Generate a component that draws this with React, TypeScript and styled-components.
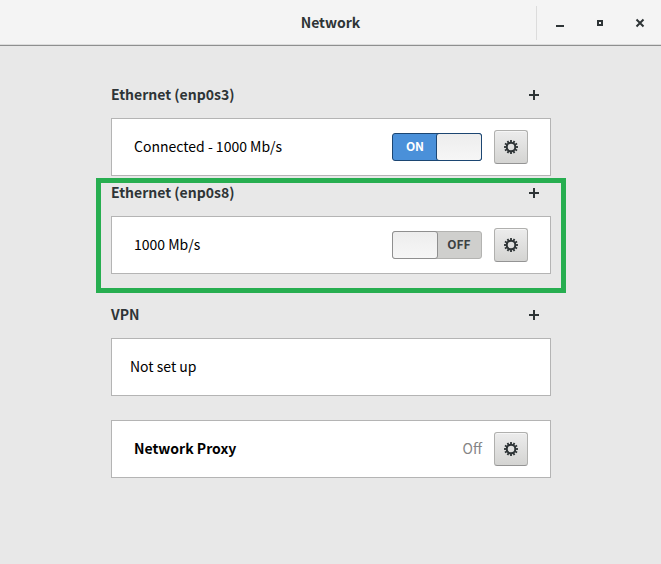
import React from 'react';
import styled, { createGlobalStyle, css } from 'styled-components';

const Global = createGlobalStyle`
  * { box-sizing: border-box; }
  body {
    margin: 0;
    background: #e8e8e8;
    color: #2e3436;
    font: 14px/20px "Noto Sans CJK SC", "Noto Sans", sans-serif;
  }
  button { font: inherit; color: inherit; padding: 0; }
`;

const HeaderBar = styled.header`
  display: grid;
  grid-template-columns: 1fr auto 1fr;
  align-items: center;
  height: 46px;
  background: #f4f4f4;
  border-bottom: 1px solid #8e8f8f;
  box-shadow: inset 0 -1px #dcdcdc;
`;

const Title = styled.h1`
  grid-column: 2;
  margin: 0;
  padding-bottom: 2px;
  font-size: 14px;
  line-height: 20px;
  font-weight: 700;
`;

const WindowControls = styled.div`
  justify-self: end;
  display: flex;
  align-items: center;
  height: 34px;
  padding: 0 1px 0 3px;
  border-left: 1px solid #dcdcdc;
`;

const WindowButton = styled.button`
  display: grid;
  place-items: center;
  width: 40px;
  height: 34px;
  border: 0;
  background: none;
`;

const Main = styled.main`
  padding: 32px 0 32px 1px;
`;

const Column = styled.div`
  max-width: 440px;
  margin: 0 auto;
`;

const Section = styled.section<{ $gap?: boolean }>`
  position: relative;
  margin-top: ${p => (p.$gap ? 24 : 0)}px;
`;

const SectionHead = styled.div`
  display: flex;
  align-items: center;
  justify-content: space-between;
  height: 34px;
  margin-bottom: 6px;
`;

const SectionTitle = styled.h2`
  margin: 0;
  padding-bottom: 2px;
  font-size: 14px;
  line-height: 20px;
  font-weight: 700;
`;

const AddButton = styled.button`
  display: grid;
  place-items: center;
  width: 34px;
  height: 34px;
  border: 0;
  background: none;
`;

const Card = styled.div<{ $inset?: number }>`
  display: flex;
  align-items: center;
  gap: 12px;
  min-height: 58px;
  padding: 0 ${p => p.$inset ?? 22}px;
  border: 1px solid #b4b4b4;
  background: #fff;
  color: #000;
`;

const Label = styled.span<{ $strong?: boolean }>`
  flex: 1;
  padding-bottom: 2px;
  font-weight: ${p => (p.$strong ? 700 : 400)};
`;

const Value = styled.span`
  padding-bottom: 2px;
  color: #858585;
`;

const SwitchBox = styled.label`
  position: relative;
  display: block;
  width: 90px;
  height: 28px;
`;

const SwitchInput = styled.input`
  position: absolute;
  inset: 0;
  width: 100%;
  height: 100%;
  margin: 0;
  opacity: 0;
`;

const Track = styled.span<{ $on: boolean }>`
  display: flex;
  flex-direction: ${p => (p.$on ? 'row' : 'row-reverse')};
  height: 28px;
  border: 1px solid #b3b3b1;
  border-radius: 3px;
  background: #cfcfcd;
  color: #3c4143;
  font-size: 12px;
  line-height: 24px;
  font-weight: 700;
  text-align: center;
  ${p => p.$on && css`
    border-color: #1c4672;
    background: #4a90d9;
    color: #fff;
  `}
`;

const TrackText = styled.span`
  flex: 1;
`;

const Knob = styled.span<{ $on: boolean }>`
  width: 46px;
  height: 28px;
  margin: -1px;
  border: 1px solid ${p => (p.$on ? '#1c4672' : '#8f8f8f')};
  border-radius: 3px;
  background: linear-gradient(#ededed, #f6f6f6);
`;

const GearButton = styled.button`
  display: grid;
  place-items: center;
  width: 34px;
  height: 34px;
  border: 1px solid #b0b0ae;
  border-bottom-color: #949494;
  border-radius: 3px;
  background: linear-gradient(#ececec, #d4d4d2);
  box-shadow: inset 0 1px #f6f6f6;
`;

const Highlight = styled.div`
  position: absolute;
  inset: 2px -15px -19px;
  border: 5px solid #27ae50;
  pointer-events: none;
`;

const teeth = Array.from({ length: 12 }, (_, i) => i * 30);

function Gear() {
  return (
    <svg width="16" height="16" viewBox="0 0 16 16" aria-hidden="true">
      <circle cx="8" cy="8" r="4.3" fill="none" stroke="#2e3436" strokeWidth="2" />
      {teeth.map(a => (
        <rect key={a} x="7.1" y="1" width="1.8" height="2.4" fill="#2e3436" transform={`rotate(${a} 8 8)`} />
      ))}
    </svg>
  );
}

function Add({ name }: { name: string }) {
  return (
    <AddButton aria-label={`Add ${name} connection`}>
      <svg width="10" height="10" aria-hidden="true">
        <path d="M5 0v10M0 5h10" stroke="#2e3436" strokeWidth="2" />
      </svg>
    </AddButton>
  );
}

function Switch({ initial, name }: { initial: boolean; name: string }) {
  const [on, setOn] = React.useState(initial);
  return (
    <SwitchBox>
      <SwitchInput type="checkbox" role="switch" aria-label={name} checked={on} onChange={() => setOn(!on)} />
      <Track $on={on}>
        <TrackText>{on ? 'ON' : 'OFF'}</TrackText>
        <Knob $on={on} />
      </Track>
    </SwitchBox>
  );
}

function Settings({ name }: { name: string }) {
  return <GearButton aria-label={`${name} settings`}><Gear /></GearButton>;
}

function Head({ title }: { title: string }) {
  return (
    <SectionHead>
      <SectionTitle>{title}</SectionTitle>
      <Add name={title} />
    </SectionHead>
  );
}

export default function App() {
  return (
    <>
      <Global />
      <HeaderBar>
        <Title>Network</Title>
        <WindowControls>
          <WindowButton aria-label="Minimize">
            <svg width="16" height="16" aria-hidden="true"><path d="M4 10h8v2H4z" fill="#2e3436" /></svg>
          </WindowButton>
          <WindowButton aria-label="Maximize">
            <svg width="16" height="16" aria-hidden="true"><path d="M6 6h4v4H6z" fill="none" stroke="#2e3436" strokeWidth="2" /></svg>
          </WindowButton>
          <WindowButton aria-label="Close">
            <svg width="16" height="16" aria-hidden="true"><path d="M4.5 4.5l7 7M11.5 4.5l-7 7" stroke="#2e3436" strokeWidth="2" /></svg>
          </WindowButton>
        </WindowControls>
      </HeaderBar>
      <Main>
        <Column>
          <Section>
            <Head title="Ethernet (enp0s3)" />
            <Card>
              <Label>Connected - 1000 Mb/s</Label>
              <Switch initial={true} name="Ethernet (enp0s3)" />
              <Settings name="Ethernet (enp0s3)" />
            </Card>
          </Section>
          <Section>
            <Head title="Ethernet (enp0s8)" />
            <Card>
              <Label>1000 Mb/s</Label>
              <Switch initial={false} name="Ethernet (enp0s8)" />
              <Settings name="Ethernet (enp0s8)" />
            </Card>
            <Highlight />
          </Section>
          <Section $gap>
            <Head title="VPN" />
            <Card $inset={18}>
              <Label>Not set up</Label>
            </Card>
          </Section>
          <Section $gap>
            <Card>
              <Label $strong>Network Proxy</Label>
              <Value>Off</Value>
              <Settings name="Network Proxy" />
            </Card>
          </Section>
        </Column>
      </Main>
    </>
  );
}
